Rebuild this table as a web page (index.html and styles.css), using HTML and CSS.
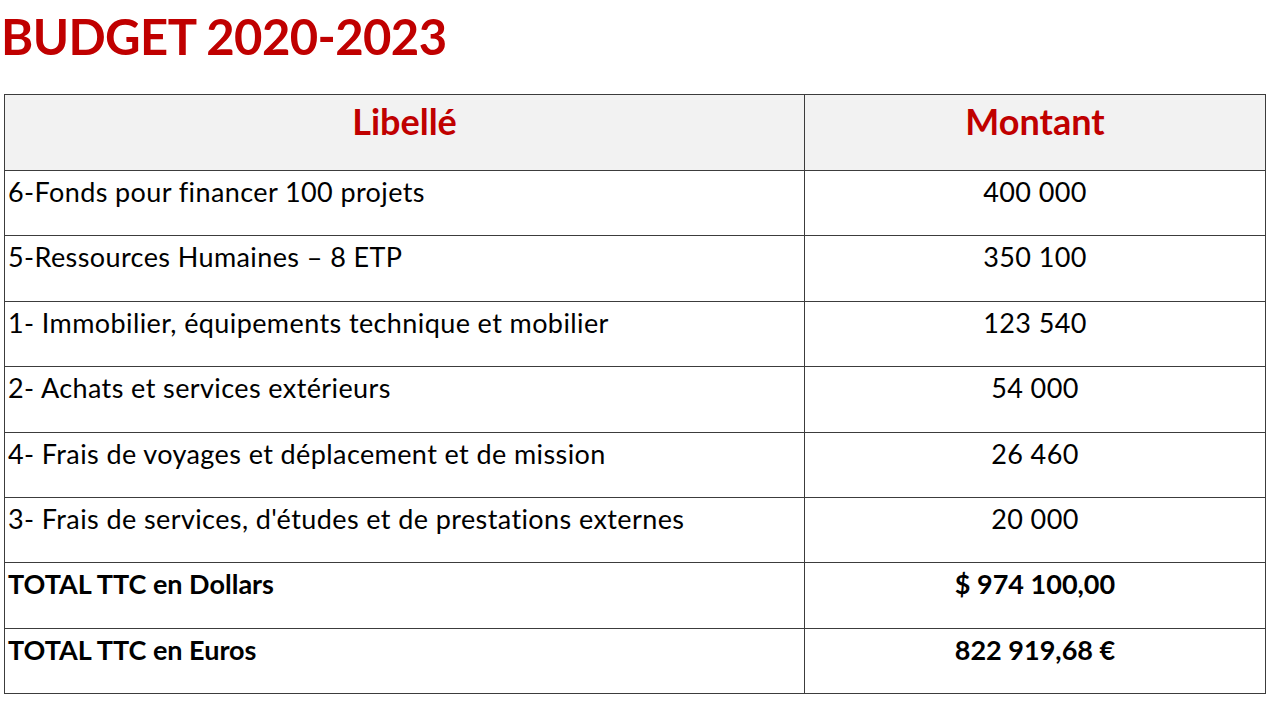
FILE: index.html
```html
<!DOCTYPE html>
<html lang="fr">
<head>
<meta charset="utf-8">
<title>Budget 2020-2023</title>
<link rel="stylesheet" href="styles.css">
</head>
<body>
<main class="page">
  <h1 class="title">BUDGET 2020-2023</h1>
  <table class="budget">
    <colgroup>
      <col class="col-label">
      <col class="col-amount">
    </colgroup>
    <thead>
      <tr class="head-row">
        <th>Libellé</th>
        <th>Montant</th>
      </tr>
    </thead>
    <tbody>
      <tr><td class="label">6-Fonds pour financer 100 projets</td><td class="amount">400 000</td></tr>
      <tr><td class="label">5-Ressources Humaines – 8 ETP</td><td class="amount">350 100</td></tr>
      <tr><td class="label">1- Immobilier, équipements technique et mobilier</td><td class="amount">123 540</td></tr>
      <tr><td class="label">2- Achats et services extérieurs</td><td class="amount">54 000</td></tr>
      <tr><td class="label">4- Frais de voyages et déplacement et de mission</td><td class="amount">26 460</td></tr>
      <tr><td class="label">3- Frais de services, d'études et de prestations externes</td><td class="amount">20 000</td></tr>
      <tr class="total"><td class="label">TOTAL TTC en Dollars</td><td class="amount">$ 974 100,00</td></tr>
      <tr class="total"><td class="label">TOTAL TTC en Euros</td><td class="amount">822 919,68 €</td></tr>
    </tbody>
  </table>
</main>
</body>
</html>
```

FILE: styles.css
```css
html, body {
  margin: 0;
  padding: 0;
  background: #ffffff;
}

.page {
  width: 1280px;
  height: 720px;
  padding: 0 0 0 4px;
  box-sizing: border-box;
  font-family: Lato, "Open Sans", "Liberation Sans", sans-serif;
  font-variant-ligatures: none;
  color: #000000;
}

.title {
  margin: 0 0 0 -3px;
  padding: 8px 0 0 0;
  height: 94px;
  box-sizing: border-box;
  font-size: 49px;
  line-height: 56px;
  font-weight: 700;
  color: #c00000;
  letter-spacing: -0.6px;
}

.budget {
  width: 1261px;
  border-collapse: collapse;
  table-layout: fixed;
}

.col-label { width: 800px; }
.col-amount { width: 461px; }

.budget th,
.budget td {
  border: 1px solid #3c3c3c;
  vertical-align: top;
  padding: 0;
}

.head-row th {
  height: 76px;
  background: #f2f2f2;
  color: #c00000;
  font-size: 36px;
  font-weight: 700;
  text-align: center;
  padding-top: 6px;
  box-sizing: border-box;
  line-height: 40px;
}

.budget td {
  height: 65.4px;
  box-sizing: border-box;
  font-size: 27px;
  line-height: 30px;
  padding-top: 6px;
  letter-spacing: 0.4px;
}

.budget td.label {
  padding-left: 3px;
  text-align: left;
}

.budget td.amount {
  text-align: center;
}

.total td {
  font-weight: 700;
  letter-spacing: 0;
}
```
